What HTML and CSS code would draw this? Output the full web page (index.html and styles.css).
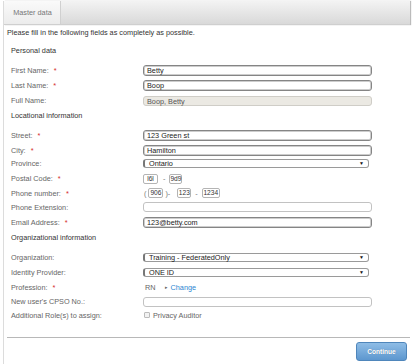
FILE: index.html
```html
<!DOCTYPE html>
<html>
<head>
<meta charset="utf-8">
<link rel="stylesheet" href="styles.css">
</head>
<body>
<div class="panel">
  <div class="tabs"><div class="tab">Master data</div></div>
  <div class="content">
    <p class="intro">Please fill in the following fields as completely as possible.</p>

    <div class="section">
      <div class="sec-title">Personal data</div>
      <div class="row"><div class="lbl">First Name: <span class="req">*</span></div><div class="inp strong">Betty</div></div>
      <div class="row"><div class="lbl">Last Name: <span class="req">*</span></div><div class="inp strong">Boop</div></div>
      <div class="row"><div class="lbl">Full Name:</div><div class="inp disabled">Boop, Betty</div></div>
    </div>

    <div class="section">
      <div class="sec-title">Locational information</div>
      <div class="row"><div class="lbl">Street: <span class="req">*</span></div><div class="inp strong">123 Green st</div></div>
      <div class="row"><div class="lbl">City: <span class="req">*</span></div><div class="inp strong">Hamilton</div></div>
      <div class="row short"><div class="lbl">Province:</div><div class="sel">Ontario<span class="arrow">&#9660;</span></div></div>
      <div class="row"><div class="lbl">Postal Code: <span class="req">*</span></div>
        <div class="parts postal"><span class="box w15">l6l</span><span class="sep">-</span><span class="box w13">9d9</span></div></div>
      <div class="row r14"><div class="lbl">Phone number: <span class="req">*</span></div>
        <div class="parts phone"><span class="sep lead">(</span><span class="box w15">906</span><span class="sep mid">)-</span><span class="box w14">123</span><span class="sep dash">-</span><span class="box w18">1234</span></div></div>
      <div class="row r14"><div class="lbl">Phone Extension:</div><div class="inp light"></div></div>
      <div class="row r16"><div class="lbl">Email Address: <span class="req">*</span></div><div class="inp strong">123@betty.com</div></div>
    </div>

    <div class="section">
      <div class="sec-title">Organizational information</div>
      <div class="row"><div class="lbl">Organization:</div><div class="sel">Training - FederatedOnly<span class="arrow">&#9660;</span></div></div>
      <div class="row"><div class="lbl">Identity Provider:</div><div class="sel">ONE ID<span class="arrow">&#9660;</span></div></div>
      <div class="row r14"><div class="lbl">Profession: <span class="req">*</span></div>
        <div class="prof"><span class="rn">RN</span><span class="tri">&#9656;</span><span class="link">Change</span></div></div>
      <div class="row"><div class="lbl">New user's CPSO No.:</div><div class="inp light"></div></div>
      <div class="row r12"><div class="lbl">Additional Role(s) to assign:</div>
        <div class="check"><span class="cb"></span><span>Privacy Auditor</span></div></div>
    </div>

    <div class="footer"><div class="btn">Continue</div></div>
  </div>
</div>
</body>
</html>
```

FILE: styles.css
```css
* { box-sizing: border-box; }
html, body { margin: 0; padding: 0; background: #fff; }
body {
  width: 412px;
  height: 364px;
  overflow: hidden;
  font-family: "Liberation Sans", Arial, sans-serif;
  font-size: 7.3px;
  color: #444;
}
.panel {
  margin-left: 3px;
  width: 407px;
  height: 364px;
  border-left: 1px solid #dcdcdc;
}
.tabs {
  margin-top: 1px;
  height: 24px;
  background: linear-gradient(#f3f3f3, #d9d9d9);
  border-bottom: 1px solid #cfcfcf;
  box-shadow: 1px 0 1px #bbb;
  display: flex;
}
.tab {
  width: 57px;
  height: 23px;
  background: linear-gradient(#fafafa, #ececec);
  border-right: 1px solid #d0d0d0;
  color: #777;
  display: flex;
  align-items: center;
  justify-content: center;
  padding-left: 1px;
}
.content { padding-left: 3px; }
.intro {
  margin: 1px 0 0 0;
  line-height: 14px;
  color: #333;
}
.section { padding-left: 4px; }
.sec-title {
  height: 16px;
  line-height: 16px;
  color: #333;
  margin-bottom: 4px;
}
.intro + .section .sec-title { margin-top: 3px; }
.row {
  display: grid;
  grid-template-columns: 132px 1fr;
  align-items: center;
  height: 15px;
}
.row.short { height: 10px; margin-bottom: 3px; }
.row.r14 { height: 14px; }
.row.r16 { height: 16px; }
.row.r12 { height: 12px; }
.lbl { color: #666; white-space: nowrap; }
.req { color: #d42a2a; margin-left: 3px; }
.inp {
  width: 229px;
  height: 11px;
  border: 1px solid #858585;
  border-radius: 3px;
  box-shadow: inset 0 0 0 1px #cdcdcd;
  padding-left: 3px;
  line-height: 9px;
  color: #222;
  background: #fff;
}
.inp.light {
  height: 10px;
  border-color: #c2c2c2;
  box-shadow: none;
}
.inp.disabled {
  height: 10px;
  background: #ebe9e3;
  border-color: #cfcdc7;
  box-shadow: none;
  color: #555;
}
.sel {
  position: relative;
  width: 226px;
  height: 9px;
  border: 1px solid #9a9a9a;
  border-left: 2px solid #777;
  border-radius: 3px;
  padding-left: 4px;
  line-height: 7px;
  color: #222;
  background: #fff;
}
.arrow {
  position: absolute;
  right: 4px;
  top: 1px;
  font-size: 5px;
  line-height: 5px;
  color: #111;
}
.parts { display: flex; align-items: center; }
.box {
  height: 10px;
  border: 1px solid #b4b4b4;
  border-radius: 2px;
  line-height: 8px;
  text-align: center;
  color: #333;
  font-size: 6.6px;
  background: #fff;
}
.w15 { width: 15px; }
.w14 { width: 14px; }
.w13 { width: 13px; }
.w18 { width: 18px; }
.sep { color: #777; }
.postal .sep { padding: 0 4px 0 5px; }
.phone .sep.lead { padding: 0 2px 0 1px; }
.phone .sep.mid { padding: 0 7px 0 2px; }
.phone .sep.dash { padding: 0 4px 0 4px; }
.prof { display: flex; align-items: center; padding-left: 2px; }
.rn { color: #666; }
.tri { color: #666; font-size: 5px; margin-left: 9px; margin-right: 3px; }
.link { color: #2a86d2; }
.check { display: flex; align-items: center; padding-left: 1px; color: #666; }
.cb {
  width: 6px;
  height: 6px;
  border: 1px solid #bbb;
  border-radius: 1px;
  background: #f2f2f2;
  margin-right: 3px;
}
.footer {
  margin-top: 16px;
  border-top: 1px solid #b8b8b8;
  height: 27px;
  display: flex;
  justify-content: flex-end;
  align-items: flex-start;
  padding-top: 4px;
  padding-right: 3px;
}
.btn {
  width: 51px;
  height: 19px;
  border: 1px solid #4f86bb;
  border-radius: 3px;
  background: linear-gradient(#8fbde6, #5d97cf);
  color: #fff;
  font-weight: bold;
  font-size: 6.6px;
  display: flex;
  align-items: center;
  justify-content: center;
  text-shadow: 0 0 1px rgba(0,0,0,0.25);
}
```
